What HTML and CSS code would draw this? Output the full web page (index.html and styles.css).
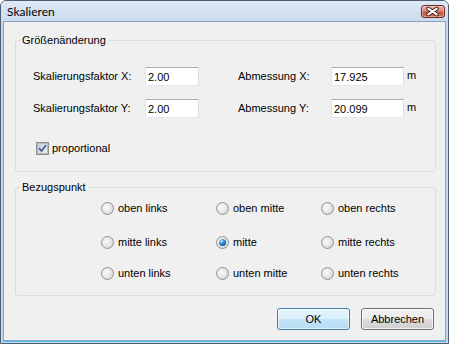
FILE: index.html
```html
<!DOCTYPE html>
<html lang="de">
<head>
<meta charset="utf-8">
<title>Skalieren</title>
<link rel="stylesheet" href="styles.css">
</head>
<body>
<div class="window">
  <div class="titlebar">
    <span class="title">Skalieren</span>
    <span class="close">
      <svg width="24" height="13" viewBox="0 0 24 13">
        <path d="M7.5 3.5 L16.5 9.5 M16.5 3.5 L7.5 9.5" stroke="#4a1d14" stroke-width="4" stroke-linecap="round" fill="none"/>
        <path d="M7.5 3.5 L16.5 9.5 M16.5 3.5 L7.5 9.5" stroke="#ffffff" stroke-width="2" stroke-linecap="round" fill="none"/>
      </svg>
    </span>
  </div>
  <div class="client">
    <fieldset class="group">
      <legend>Größenänderung</legend>
      <div class="fields">
        <span class="lbl">Skalierungsfaktor X:</span>
        <span class="cell"><input class="input w54" type="text" value="2.00"></span>
        <span class="lbl">Abmessung X:</span>
        <input class="input w73" type="text" value="17.925">
        <span class="unit">m</span>
        <span class="lbl">Skalierungsfaktor Y:</span>
        <span class="cell"><input class="input w54" type="text" value="2.00"></span>
        <span class="lbl">Abmessung Y:</span>
        <input class="input w73" type="text" value="20.099">
        <span class="unit">m</span>
      </div>
      <label class="check">
        <span class="box">
          <svg width="9" height="9" viewBox="0 0 9 9">
            <path d="M1 4.2 L3.6 7 L8 1.2" stroke="#3d5a9c" stroke-width="1.7" fill="none"/>
          </svg>
        </span>
        <span>proportional</span>
      </label>
    </fieldset>
    <fieldset class="group ref">
      <legend>Bezugspunkt</legend>
      <div class="radios">
        <span class="opt"><span class="radio"></span>oben links</span>
        <span class="opt"><span class="radio"></span>oben mitte</span>
        <span class="opt"><span class="radio"></span>oben rechts</span>
        <span class="opt"><span class="radio"></span>mitte links</span>
        <span class="opt"><span class="radio on"><span class="dot"></span></span>mitte</span>
        <span class="opt"><span class="radio"></span>mitte rechts</span>
        <span class="opt"><span class="radio"></span>unten links</span>
        <span class="opt"><span class="radio"></span>unten mitte</span>
        <span class="opt"><span class="radio"></span>unten rechts</span>
      </div>
    </fieldset>
    <div class="buttons">
      <button class="btn default" type="button">OK</button>
      <button class="btn" type="button">Abbrechen</button>
    </div>
  </div>
</div>
</body>
</html>
```
FILE: styles.css
```css
html, body {
  margin: 0;
  padding: 0;
  background: #ffffff;
}

body {
  font-family: "Liberation Sans", Arial, sans-serif;
  font-size: 11px;
  color: #000000;
}

.window {
  width: 449px;
  height: 344px;
  box-sizing: border-box;
  border: 1px solid #4f5f76;
  border-radius: 6px 6px 0 0;
  background: #c6d7ec;
  display: flex;
  flex-direction: column;
  overflow: hidden;
}

.titlebar {
  height: 20px;
  flex: none;
  display: flex;
  align-items: flex-start;
  justify-content: space-between;
  background: linear-gradient(#dfe9f6, #cbdbef);
}

.title {
  font-family: Lato, "Liberation Sans", sans-serif;
  font-size: 12px;
  line-height: 14px;
  padding: 4px 0 0 6px;
  color: #000000;
}

.close {
  display: flex;
  margin: 4px 3px 0 0;
  width: 24px;
  height: 13px;
  box-sizing: border-box;
  border: 1px solid #6e2a20;
  border-radius: 3px;
  background: linear-gradient(#e8b0a5 0%, #d98a7a 45%, #c4533d 55%, #d0735c 100%);
  box-shadow: inset 0 0 0 1px rgba(255, 255, 255, 0.35);
  overflow: hidden;
}

.close svg {
  display: block;
  margin: -1px 0 0 -1px;
}

.client {
  flex: 1;
  margin: 0 2px 2px 2px;
  border: 1px solid #8da2bc;
  background: #f0f0f0;
  padding: 0 9px 0 11px;
  box-shadow: 0 1px 0 #49c3ef;
}

.group {
  margin: 12px 0 0 0;
  padding: 0;
  border: 1px solid #d5dfe5;
  border-radius: 3px;
  min-width: 0;
}

.group.ref {
  margin-top: 9px;
}

.group legend {
  margin-left: 4px;
  padding: 0 2px;
  font-size: 11px;
  line-height: 13px;
}

.fields {
  display: grid;
  grid-template-columns: 112px 93px 93px 73px auto;
  grid-auto-rows: 19px;
  row-gap: 13px;
  align-items: center;
  padding: 20px 0 0 17px;
}

.lbl {
  white-space: nowrap;
  line-height: 13px;
}

.cell {
  display: flex;
}

.input {
  box-sizing: border-box;
  height: 19px;
  margin: 0;
  padding: 1px 0 0 2px;
  font-family: "Liberation Sans", Arial, sans-serif;
  font-size: 11px;
  color: #000000;
  background: #ffffff;
  border: 1px solid;
  border-color: #abadb3 #dbdfe6 #e3e9ef #e2e3ea;
  outline: none;
}

.w54 {
  width: 54px;
}

.w73 {
  width: 73px;
}

.unit {
  padding-left: 3px;
  align-self: start;
  line-height: 13px;
  margin-top: 2px;
}

.check {
  display: flex;
  align-items: center;
  gap: 3px;
  margin: 24px 0 16px 20px;
  line-height: 13px;
}

.box {
  width: 13px;
  height: 13px;
  box-sizing: border-box;
  border: 1px solid #8e8f8f;
  background: #f4f4f4;
  display: flex;
  align-items: center;
  justify-content: center;
}

.box svg {
  display: block;
  background: linear-gradient(135deg, #c6ccd6, #eef0f3);
  border: 1px solid #b4bac4;
}

.radios {
  display: grid;
  grid-template-columns: 115px 105px auto;
  grid-template-rows: 34px 31px 16px;
  padding: 6px 0 14px 85px;
}

.opt {
  display: flex;
  align-items: center;
  gap: 4px;
  height: 16px;
  align-self: start;
  white-space: nowrap;
}

.radio {
  width: 13px;
  height: 13px;
  box-sizing: border-box;
  border: 1px solid #929292;
  border-radius: 50%;
  background: radial-gradient(circle at 40% 40%, #fbfbfb 0%, #e6e6e6 50%, #c9c9c9 100%);
  display: flex;
  align-items: center;
  justify-content: center;
  flex: none;
}

.dot {
  width: 7px;
  height: 7px;
  border-radius: 50%;
  background: radial-gradient(circle at 35% 30%, #b9e6fb 0%, #3f97d6 35%, #0f5aa0 70%, #0a3563 100%);
}

.buttons {
  display: flex;
  justify-content: flex-end;
  gap: 11px;
  margin: 12px 2px 0 0;
}

.btn {
  width: 73px;
  height: 22px;
  margin: 0;
  padding: 0;
  font-family: "Liberation Sans", Arial, sans-serif;
  font-size: 11px;
  color: #000000;
  border: 1px solid #707070;
  border-radius: 3px;
  background: linear-gradient(#f2f2f2 0%, #ebebeb 50%, #dddddd 51%, #cfcfcf 100%);
  box-shadow: inset 0 0 0 1px rgba(255, 255, 255, 0.7);
}

.btn.default {
  border-color: #3c7fb1;
  background: linear-gradient(#e8f5fc 0%, #d9effa 50%, #c4e4f6 51%, #b7dcf2 100%);
  box-shadow: inset 0 0 0 1px rgba(255, 255, 255, 0.6);
}
```
